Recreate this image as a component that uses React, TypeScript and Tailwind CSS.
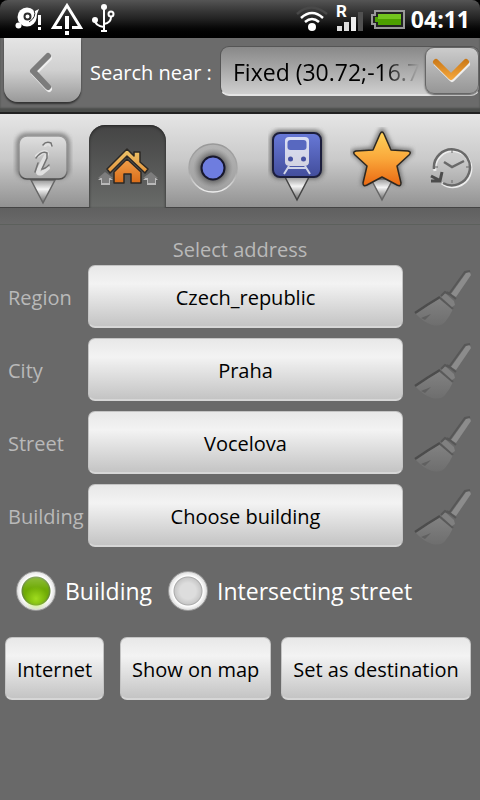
import { useState } from "react";
import type { ReactNode } from "react";

function StatusBar() {
  return (
    <header className="flex h-[38px] items-center justify-between rounded-t-lg bg-linear-to-b from-[#555] via-[#222] via-50% to-black pl-[15px] pr-[10px]">
      <svg width="100" height="38" viewBox="0 0 100 38" aria-label="Notifications">
        <g fill="#fff">
          <circle cx="12" cy="17" r="9.5" />
          <circle cx="3.500" cy="25.500" r="3" />
          <path d="M18 12L24 9L22 14L21 20L16 22Z" />
          <path d="M23 15h3v10h-3zM23 27h3v3h-3z" />
        </g>
        <circle cx="12.500" cy="16.500" r="3" fill="none" stroke="#2c2c2c" strokeWidth="2" />
        <path d="M19 10Q22 17 14 22" fill="none" stroke="#2c2c2c" />
        <path d="M47 27.500H38.500L52 5.500L65.500 27.500H57" fill="none" stroke="#fff" strokeWidth="3" />
        <path d="M50 16h4v13h-4zM50 31h4v4h-4z" fill="#fff" />
        <g fill="none" stroke="#fff" strokeWidth="2">
          <path d="M89 7V31M86 31H92M80 20Q80 26 89 27M89 24Q96 23 96 17" />
          <circle cx="96" cy="14" r="2.500" />
        </g>
        <circle cx="89" cy="7" r="3" fill="#fff" />
        <circle cx="80" cy="20" r="3" fill="#fff" />
      </svg>
      <div className="flex items-center gap-[5px]">
        <svg width="110" height="38" viewBox="0 0 110 38" aria-label="Wi-Fi, roaming signal and battery">
          <g fill="none" strokeWidth="2.500">
            <path d="M1 14Q15 1 31 14" stroke="#484848" />
            <path d="M5 18Q16 8 27 18" stroke="#fff" />
            <path d="M9 22Q16 16 23 22" stroke="#fff" />
          </g>
          <circle cx="16" cy="27" r="4" fill="#fff" />
          <path d="M41 26h5v5h-5z" fill="#ddd" />
          <path d="M48 22h5v9h-5z" fill="#ddd" />
          <path d="M55 17h5v14h-5z" fill="#eee" />
          <path d="M62 12h5v19h-5z" fill="#505050" />
          <text x="40" y="17" fill="#fff" fontSize="17" fontWeight="700" fontFamily="Roboto, sans-serif">R</text>
          <path d="M79 11H108V28H79V24H76V15H79Z" fill="#222" stroke="#999" strokeWidth="2" />
          <path d="M82 14H105V25H82V22H79V17H82Z" fill="#4da000" />
          <path d="M82 14H105V19H82Z" fill="#73c51f" />
        </svg>
        <time className="text-[23px] font-bold leading-[38px] text-white">04:11</time>
      </div>
    </header>
  );
}

function InfoIcon() {
  return (
    <svg width="60" height="80" viewBox="0 0 60 80">
      <defs>
        <linearGradient id="infoFace" x2="0" y2="1"><stop stopColor="#e0e0e0" /><stop offset="1" stopColor="#a6a6a6" /></linearGradient>
        <linearGradient id="pinTip" x2="0" y2="1"><stop stopColor="#999" /><stop offset=".4" stopColor="#f4f4f4" /><stop offset="1" stopColor="#666" /></linearGradient>
        <linearGradient id="infoEdge" x2="0" y2="1"><stop stopColor="#999" /><stop offset=".8" stopColor="#888" /><stop offset="1" stopColor="#4a4a4a" /></linearGradient>
        <filter id="soft" x="-30%" y="-30%" width="160%" height="160%"><feGaussianBlur stdDeviation="2" /></filter>
      </defs>
      <rect x="3" y="6" width="54" height="46" rx="10" fill="#6f6f6f" opacity=".8" filter="url(#soft)" />
      <path d="M18 53L30 76L42 53Z" fill="url(#pinTip)" stroke="#666" strokeWidth="1.500" />
      <rect x="6" y="9" width="48" height="43" rx="8" fill="url(#infoFace)" stroke="url(#infoEdge)" strokeWidth="1.500" />
      <path d="M32 18Q35 15 38 18M24 29Q33 22 34 27L26 42Q23 48 29 46L35 41" fill="none" stroke="#e0e0e0" strokeWidth="4" strokeLinecap="round" />
      <path d="M30 18Q33 14 38 16L39 19M23 31Q29 23 34 26L34 31L29 42Q32 42 36 38M25 36L22 45" fill="none" stroke="#737373" strokeWidth="1.500" strokeLinecap="round" />
    </svg>
  );
}

function HomeIcon() {
  return (
    <svg width="64" height="40" viewBox="0 0 64 40">
      <defs>
        <linearGradient id="roof" x2="0" y2="1"><stop stopColor="#ecc56b" /><stop offset="1" stopColor="#e5953d" /></linearGradient>
        <linearGradient id="walls" x2="0" y2="1"><stop stopColor="#f0a04b" /><stop offset="1" stopColor="#d96c18" /></linearGradient>
      </defs>
      <path d="M2 33L9 26L17 33H14V38H5V33ZM47 33L55 26L62 33H60V38H51V33Z" fill="#b8b8b8" />
      <path d="M2 31L9 25L17 31H13V36H6V31ZM47 31L55 25L62 31H59V36H52V31Z" fill="#7d7d7d" />
      <path d="M11 22L31 2L38 9V5H44V15L52 22L49 26L31 9L14 26Z" fill="url(#roof)" stroke="#2b2825" strokeWidth="1.500" strokeLinejoin="round" />
      <path d="M18 25L31 12L45 25V36H35V27H28V36H18Z" fill="url(#walls)" stroke="#2b2825" strokeWidth="1.500" strokeLinejoin="round" />
    </svg>
  );
}

function TargetIcon() {
  return (
    <svg width="52" height="52" viewBox="0 -2 52 52">
      <defs>
        <linearGradient id="disc" x2="0" y2="1"><stop stopColor="#b4b4b4" /><stop offset="1" stopColor="#a0a0a0" /></linearGradient>
        <linearGradient id="rim" x2="0" y2="1"><stop stopColor="#999" /><stop offset=".6" stopColor="#aaa" /><stop offset="1" stopColor="#eee" /></linearGradient>
        <radialGradient id="halo"><stop offset=".5" stopColor="#333" /><stop offset="1" stopColor="#777" stopOpacity="0" /></radialGradient>
      </defs>
      <circle cx="26" cy="25" r="24" fill="url(#disc)" stroke="url(#rim)" strokeWidth="1.500" />
      <circle cx="26" cy="25" r="20" fill="url(#halo)" opacity=".8" />
      <circle cx="26" cy="25" r="11.500" fill="#6e7ddf" stroke="#18182d" strokeWidth="2" />
    </svg>
  );
}

function TrainIcon() {
  return (
    <svg width="60" height="80" viewBox="1 4 60 80">
      <defs>
        <linearGradient id="trainFace" x2="0" y2="1"><stop stopColor="#6879d8" /><stop offset="1" stopColor="#424d9b" /></linearGradient>
        <linearGradient id="trainBody" x2="0" y2="1"><stop stopColor="#d9def5" /><stop offset="1" stopColor="#d3d3e1" /></linearGradient>
      </defs>
      <rect x="3" y="7" width="54" height="49" rx="9" fill="#555" opacity=".8" filter="url(#soft)" />
      <path d="M18 54L30 77L42 54Z" fill="url(#pinTip)" stroke="#444" strokeWidth="1.500" />
      <rect x="6" y="10" width="48" height="44" rx="7" fill="url(#trainFace)" stroke="#1c1e3c" strokeWidth="2" />
      <path d="M22 14H38Q42 14 42 18V39Q42 43 37 43H23Q18 43 18 39V18Q18 14 22 14Z" fill="url(#trainBody)" />
      <rect x="20.500" y="17" width="19" height="10" rx="3" fill="#5868c0" />
      <circle cx="23.500" cy="36" r="2.500" fill="#4550a2" />
      <circle cx="36.500" cy="36" r="2.500" fill="#4550a2" />
      <path d="M22 43L17 51M38 43L43 51M21 45H39" stroke="#d0d4e8" strokeWidth="2" />
    </svg>
  );
}

function StarIcon() {
  return (
    <svg width="66" height="80" viewBox="1 4 66 80">
      <defs>
        <linearGradient id="starFace" x2="0" y2="1"><stop stopColor="#ffd35c" /><stop offset=".5" stopColor="#faa73a" /><stop offset="1" stopColor="#e96812" /></linearGradient>
      </defs>
      <path d="M33 8L42 27L61 29L47 42L51 60L33 53L15 60L19 42L5 29L24 27Z" fill="#555" stroke="#555" strokeWidth="6" strokeLinejoin="round" opacity=".7" filter="url(#soft)" />
      <path d="M22 56L33 77L44 56Z" fill="url(#pinTip)" stroke="#666" strokeWidth="1.500" />
      <path d="M31 11Q33 7 35 11L42 27L59 28Q63 29 60 32L48 43L52 60Q52 64 48 62L33 54L18 62Q14 64 14 60L18 43L6 32Q3 29 7 28L24 27Z" fill="url(#starFace)" stroke="#2c2822" strokeWidth="1.500" strokeLinejoin="round" />
    </svg>
  );
}

function HistoryIcon() {
  return (
    <svg width="44" height="44" viewBox="0 0 44 44">
      <path d="M6 24A18 18 0 1 1 13 36" fill="none" stroke="#eee" strokeWidth="3" transform="translate(0 2)" />
      <g fill="none" stroke="#696969" strokeWidth="2.500">
        <path d="M5 24A18 18 0 1 1 14 38" />
        <path d="M15 17L23 22L35 16" strokeWidth="2.500" />
        <path d="M23 5V8M23 35V38M6 22H9M37 22H40" strokeWidth="1" />
      </g>
      <path d="M2 36H11L13 27M2 31L10 35" fill="none" stroke="#4c4c4c" strokeWidth="3" />
    </svg>
  );
}

function BroomIcon() {
  return (
    <svg width="62" height="62" viewBox="0 -2 62 62">
      <defs>
        <linearGradient id="bristles" x2="0" y2="1"><stop stopColor="#828282" /><stop offset="1" stopColor="#6e6e6e" /></linearGradient>
      </defs>
      <path d="M4 45Q12 54 21 57Q30 59 34 54Q39 48 42 41L29 30Z" fill="url(#bristles)" />
      <path d="M4 45L16 37L29 29" fill="none" stroke="#4c4c4c" strokeWidth="2.500" />
      <path d="M29 30L42 41" stroke="#5a5a5a" strokeWidth="2" />
      <path d="M34 25L43 33L44 37L41 39L30 29Z" fill="#808080" />
      <path d="M40 26L55 5Q59 2 60 7L45 29Z" fill="#8c8c8c" />
      <path d="M30 28L34 24L38 26L54 4L59 3M36 24L45 31" fill="none" stroke="#575757" strokeWidth="2" />
      <path d="M10 50L20 46L14 52" fill="#606060" />
    </svg>
  );
}

const tabs: { name: string; icon: ReactNode }[] = [
  { name: "Info", icon: <InfoIcon /> },
  { name: "Address", icon: <HomeIcon /> },
  { name: "Location", icon: <TargetIcon /> },
  { name: "Transport", icon: <TrainIcon /> },
  { name: "Favorites", icon: <StarIcon /> },
];

function Tabs() {
  const [active, setActive] = useState("Address");
  return (
    <nav className="flex h-[94px] border-b border-[#444] bg-linear-to-b from-[#e6e6e6] via-[#c9c9c9] to-[#929292] shadow-[0_2px_3px_#444]">
      {tabs.map((tab) => (
        <button
          key={tab.name}
          type="button"
          aria-label={tab.name}
          aria-pressed={active === tab.name}
          onClick={() => setActive(tab.name)}
          className={
            active === tab.name
              ? "mx-1 mt-[11px] -mb-px flex w-[77px] shrink-0 items-center justify-center rounded-t-[16px] bg-linear-to-b from-[#444] to-[#696b69] shadow-[inset_0_1px_3px_#222]"
              : "flex w-[85px] shrink-0 items-center justify-center pt-3"
          }
        >
          {tab.icon}
        </button>
      ))}
      <button type="button" aria-label="History" className="flex grow items-center justify-center pr-1 pt-3">
        <HistoryIcon />
      </button>
    </nav>
  );
}

const buttonStyle =
  "h-[63px] rounded-[7px] border border-[#c4c4c4] border-b-2 border-b-[#d6d6d6] bg-linear-to-b from-[#e8e8e8] via-[#f3f3f3] via-30% to-[#c4c4c4] pt-[3px] text-[20px] whitespace-nowrap text-black";

const fields = [
  { name: "Region", value: "Czech_republic" },
  { name: "City", value: "Praha" },
  { name: "Street", value: "Vocelova" },
  { name: "Building", value: "Choose building" },
];

const radioStyle =
  "size-[40px] appearance-none rounded-full border border-[#999] bg-[radial-gradient(circle_at_50%_50%,#ddd_0_8px,#c8c8c8_13px,#aaa_14px,#fff_15px,#ddd_19px)] checked:bg-[linear-gradient(#ffffff50,#ffffff00_45%),radial-gradient(circle_at_50%_70%,#a0dc1e,#a0dc1e00_12px),radial-gradient(circle_at_50%_50%,#6fab05_0_12px,#668a38_14px,#fff_15px,#ddd_19px)]";

export default function App() {
  const [mode, setMode] = useState("building");
  return (
    <div className="min-h-screen bg-black font-['Open_Sans','Noto_Sans',sans-serif]">
      <div className="flex min-h-screen flex-col bg-[#696969]">
        <div className="bg-black">
          <StatusBar />
        </div>
        <div className="flex h-[76px] border-b-2 border-[#222] bg-[#6b6b6b] shadow-[inset_0_-4px_2px_#4b4d4b]">
          <button
            type="button"
            aria-label="Back"
            className="ml-1 flex h-[64px] w-[77px] items-center justify-center rounded-b-[14px] bg-linear-to-b from-[#e5e5e5] via-[#d0d0d0] to-[#999] pt-1 shadow-[0_2px_2px_#333]"
          >
            <svg width="28" height="42" viewBox="1 0 28 42">
              <path d="M20 6L5 21L20 37" fill="none" stroke="#eee" strokeWidth="6" strokeLinecap="round" strokeLinejoin="round" transform="translate(1 1)" />
              <path d="M20 5L5 20L20 36" fill="none" stroke="#7c7c7c" strokeWidth="6" strokeLinecap="round" strokeLinejoin="round" />
            </svg>
          </button>
          <label htmlFor="near" className="w-[139px] shrink-0 pl-[9px] text-[20px] leading-[70px] text-white">
            Search near :
          </label>
          <div className="relative mt-2 h-[50px] min-w-0 grow rounded-[9px] border border-[#555] border-b-2 border-b-[#e4e4e4] bg-linear-to-b from-[#888] to-[#cfcfcf]">
            <select
              id="near"
              className="h-full w-full appearance-none bg-transparent pl-3 pt-1 text-[23px] text-black [mask-image:linear-gradient(to_right,black_calc(100%-96px),transparent_calc(100%-60px))]"
            >
              <option>Fixed (30.72;-16.7</option>
            </select>
            <span className="pointer-events-none absolute inset-y-0 right-0 flex w-[54px] items-center justify-center rounded-[9px] border border-[#666] bg-linear-to-b from-[#ccc] to-[#969696] shadow-[0_1px_2px_#555]">
              <svg width="40" height="28" viewBox="0 0 40 28">
                <defs>
                  <linearGradient id="arrow" gradientUnits="userSpaceOnUse" x1="0" y1="2" x2="0" y2="26"><stop stopColor="#c97716" /><stop offset="1" stopColor="#fdb044" /></linearGradient>
                </defs>
                <path d="M5 7L20 22L35 7" fill="none" stroke="#eee" strokeWidth="6" strokeLinecap="round" strokeLinejoin="round" />
                <path d="M4 5L19 20L34 5" fill="none" stroke="url(#arrow)" strokeWidth="6" strokeLinecap="round" strokeLinejoin="round" />
              </svg>
            </span>
          </div>
        </div>
        <Tabs />
        <div className="h-[17px] border-b border-[#5c605c] bg-linear-to-b from-[#606060] to-[#696969]" />
        <main>
          <h1 className="pt-[10px] text-center text-[20px] leading-[30px] text-[#b9b9b9]">Select address</h1>
          <div className="flex flex-col gap-[10px]">
            {fields.map((field) => (
              <div key={field.name} className="flex items-center">
                <label htmlFor={field.name} className="w-[88px] shrink-0 pl-2 pt-[2px] text-[20px] text-[#b9b9b9]">
                  {field.name}
                </label>
                <button id={field.name} type="button" className={buttonStyle + " grow"}>
                  {field.value}
                </button>
                <button type="button" aria-label={"Clear " + field.name} className="flex w-[77px] shrink-0 justify-center">
                  <BroomIcon />
                </button>
              </div>
            ))}
          </div>
          <fieldset className="flex items-center pl-4 pt-6 text-[23px] leading-[40px] text-white">
            <label className="flex items-center gap-[9px]">
              <input type="radio" name="mode" className={radioStyle} checked={mode === "building"} onChange={() => setMode("building")} />
              Building
            </label>
            <label className="ml-4 flex items-center gap-[9px]">
              <input type="radio" name="mode" className={radioStyle} checked={mode === "street"} onChange={() => setMode("street")} />
              Intersecting street
            </label>
          </fieldset>
          <div className="flex pl-[5px] pt-[26px]">
            <button type="button" className={buttonStyle + " px-[11px]"}>Internet</button>
            <button type="button" className={buttonStyle + " ml-4 px-[11px]"}>Show on map</button>
            <button type="button" className={buttonStyle + " ml-[10px] px-[11px]"}>Set as destination</button>
          </div>
        </main>
      </div>
    </div>
  );
}
